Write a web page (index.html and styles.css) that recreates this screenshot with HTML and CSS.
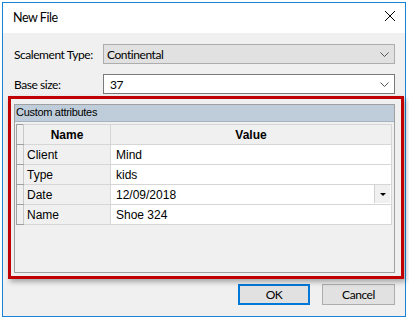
FILE: index.html
```html
<!DOCTYPE html>
<html lang="en">

<head>
    <meta charset="UTF-8">
    <title>New File</title>
    <link rel="stylesheet" href="styles.css">
</head>

<body>
    <div class="window">
        <div class="titlebar">
            <span class="title">New File</span>
            <svg class="close" width="12" height="12" viewBox="0 0 12 12">
                <path d="M1 1 L11 11 M11 1 L1 11" stroke="#000" stroke-width="1" fill="none"/>
            </svg>
        </div>

        <div class="content">
            <div class="form-row">
                <label>Scalement Type:</label>
                <div class="combo combo-locked">
                    <span>Continental</span>
                    <svg width="9" height="5" viewBox="0 0 9 5"><path d="M0.5 0.5 L4.5 4.5 L8.5 0.5" stroke="#555" fill="none"/></svg>
                </div>
            </div>
            <div class="form-row">
                <label>Base size:</label>
                <div class="combo">
                    <span>37</span>
                    <svg width="9" height="5" viewBox="0 0 9 5"><path d="M0.5 0.5 L4.5 4.5 L8.5 0.5" stroke="#555" fill="none"/></svg>
                </div>
            </div>

            <div class="group">
                <div class="group-header">Custom attributes</div>
                <table class="grid">
                    <tr>
                        <th class="handle"></th>
                        <th class="col-name">Name</th>
                        <th>Value</th>
                    </tr>
                    <tr>
                        <td class="handle"></td>
                        <td class="col-name">Client</td>
                        <td>Mind</td>
                    </tr>
                    <tr>
                        <td class="handle"></td>
                        <td class="col-name">Type</td>
                        <td>kids</td>
                    </tr>
                    <tr>
                        <td class="handle"></td>
                        <td class="col-name">Date</td>
                        <td class="with-drop"><span>12/09/2018</span><span class="drop"><i></i></span></td>
                    </tr>
                    <tr>
                        <td class="handle"></td>
                        <td class="col-name">Name</td>
                        <td>Shoe 324</td>
                    </tr>
                </table>
            </div>

            <div class="button-panel">
                <button class="default">OK</button>
                <button>Cancel</button>
            </div>
        </div>

        <!-- annotation frame -->
        <div class="highlight"></div>
    </div>
</body>

</html>
```

FILE: styles.css
```css
body {
    margin: 0;
    background-color: #fff;
    font-family: Lato, "Liberation Sans", sans-serif;
    font-size: 12px;
    letter-spacing: -0.45px;
    color: #000;
}

.window {
    position: relative;
    margin: 2px 0 0 2px;
    width: 404px;
    height: 315px;
    box-sizing: border-box;
    border: 1px solid #1883d7;
    background-color: #f0f0f0;
}

.titlebar {
    height: 30px;
    background-color: #fff;
    display: flex;
    align-items: center;
    justify-content: space-between;
    padding: 0 9px 0 10px;
}

.title {
    font-size: 12.5px;
    color: #000;
    margin-top: -2px;
}

.close {
    margin-top: -4px;
}

.content {
    padding: 11px 10px 0 11px;
}

.form-row {
    display: flex;
    align-items: center;
    height: 20px;
    margin-bottom: 10px;
}

.form-row label {
    flex: 0 0 89px;
    white-space: nowrap;
}

.combo {
    flex: 1;
    height: 20px;
    box-sizing: border-box;
    border: 1px solid #7a7a7a;
    background-color: #fff;
    display: flex;
    align-items: center;
    justify-content: space-between;
    padding: 0 5px 0 6px;
}

.combo-locked {
    background-color: #e1e1e1;
    border-color: #adadad;
    padding-left: 3px;
}

.group {
    height: 169px;
    box-sizing: border-box;
    border: 1px solid #a0a0a0;
    background-color: #f0f0f0;
}

.group-header {
    height: 16px;
    line-height: 15px;
    background-color: #bfcddb;
    border-bottom: 1px solid #a5b3c0;
    font-family: "Liberation Sans", sans-serif;
    font-size: 11px;
    padding-left: 1px;
    letter-spacing: -0.3px;
}

.grid {
    border-collapse: collapse;
    margin: 2px 0 0 1px;
    width: 376px;
    font-family: "Liberation Sans", sans-serif;
    font-size: 12px;
    letter-spacing: 0;
}

.grid th,
.grid td {
    height: 19px;
    padding: 0 0 0 5px;
    border: 1px solid #d6d6d6;
    text-align: left;
    background-color: #fff;
}

.grid th {
    background-color: #f0f0f0;
    text-align: center;
    font-weight: bold;
    padding: 0;
}

.grid .handle {
    width: 6px;
    padding: 0;
    background-color: #f0f0f0;
    border-color: #a0a0a0 #c8c8c8 #a0a0a0 #a0a0a0;
}

.grid .col-name {
    width: 83px;
    padding-left: 3px;
    background-color: #f0f0f0;
}

.grid th.col-name {
    padding: 0;
}

.with-drop {
    position: relative;
}

.drop {
    position: absolute;
    right: 1px;
    top: 0;
    width: 15px;
    height: 18px;
    background-color: #f0f0f0;
    border-left: 1px solid #d0d0d0;
    display: flex;
    align-items: center;
    justify-content: center;
}

.drop i {
    width: 0;
    height: 0;
    border-left: 3px solid transparent;
    border-right: 3px solid transparent;
    border-top: 3px solid #000;
}

.button-panel {
    display: flex;
    justify-content: flex-end;
    gap: 12px;
    margin-top: 11px;
}

button {
    width: 73px;
    height: 21px;
    box-sizing: border-box;
    border: 1px solid #adadad;
    background-color: #e1e1e1;
    font-family: Lato, "Liberation Sans", sans-serif;
    font-size: 12px;
    letter-spacing: -0.45px;
    color: #000;
    padding: 0;
}

button.default {
    width: 72px;
    border: 2px solid #0078d7;
}

.highlight {
    position: absolute;
    left: 5px;
    top: 93px;
    width: 396px;
    height: 183px;
    box-sizing: border-box;
    border: 3px solid #c00000;
    box-shadow: 2px 3px 5px rgba(0, 0, 0, 0.3);
}
```
